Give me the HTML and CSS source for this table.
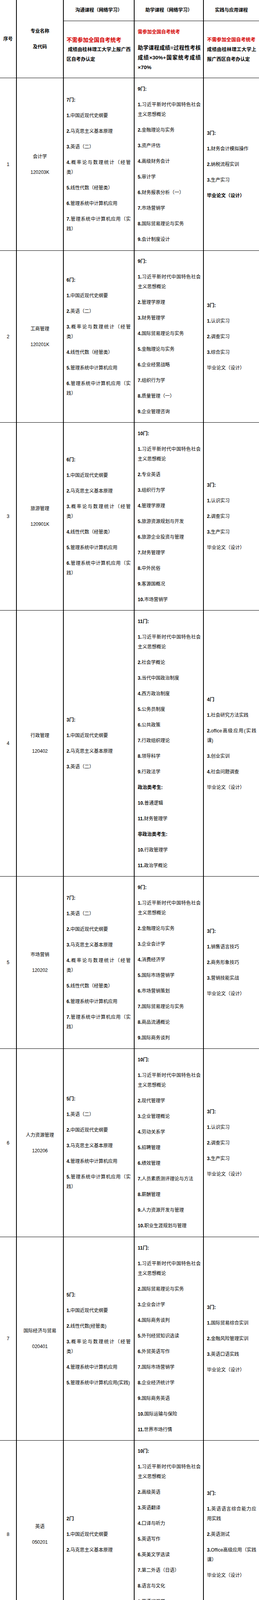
FILE: index.html
```html
<!DOCTYPE html>
<html lang="zh-CN">
<head>
<meta charset="utf-8">
<meta name="viewport" content="width=662, initial-scale=1">
<title>专业课程设置</title>
<link rel="stylesheet" href="styles.css">
</head>
<body>
<div class="plan">
<div class="head">
<div class="cell no hspan"><p>序号</p></div>
<div class="cell major hspan"><p>专业名称</p><p>及代码</p></div>
<div class="cell title">沟通课程（网络学习）</div>
<div class="cell title">助学课程（网络学习）</div>
<div class="cell title last">实践与应用课程</div>
<div class="cell comm"><div class="red lg">不需参加全国自考统考</div><div class="note indent">成绩由桂林理工大学上报广西区自考办认定</div></div>
<div class="cell aid"><p class="red">需参加全国自考统考</p><p class="formula">助学课程成绩=过程性考核成绩×30%+国家统考成绩<span class="nw">×70%</span></p></div>
<div class="cell prac last"><div class="red md">不需参加全国自考统考</div><div class="note">成绩由桂林理工大学上报广西区自考办认定</div></div>
</div>

<div class="row h442">
<div class="cell no">1</div>
<div class="cell major"><p>会计学</p><p>120203K</p></div>
<div class="cell comm">
<p class="h">7门:</p>
<p><b>1.</b>中国近现代史纲要</p>
<p><b>2.</b>马克思主义基本原理</p>
<p><b>3.</b>英语（二）</p>
<p><span class="l1"><b>4.</b>概率论与数理统计（经管</span>类）</p>
<p><b>5.</b>线性代数（经管类）</p>
<p><b>6.</b>管理系统中计算机应用</p>
<p><span class="l1"><b>7.</b>管理系统中计算机应用（实</span>践）</p>
</div>
<div class="cell aid">
<p class="h">9门:</p>
<p><span class="l1"><b>1.</b>习近平新时代中国特色社会</span>主义思想概论</p>
<p><b>2.</b>金融理论与实务</p>
<p><b>3.</b>资产评估</p>
<p><b>4.</b>高级财务会计</p>
<p><b>5.</b>审计学</p>
<p><b>6.</b>财务报表分析（一）</p>
<p><b>7.</b>市场营销学</p>
<p><b>8.</b>国际贸易理论与实务</p>
<p><b>9.</b>会计制度设计</p>
</div>
<div class="cell prac last">
<p class="h">3门:</p>
<p><b>1.</b>财务会计模拟操作</p>
<p><b>2.</b>纳税流程实训</p>
<p><b>3.</b>生产实习</p>
<p class="h">毕业论文（设计）</p>
</div>
</div>

<div class="row h440">
<div class="cell no">2</div>
<div class="cell major"><p>工商管理</p><p>120201K</p></div>
<div class="cell comm">
<p class="h">6门:</p>
<p><b>1.</b>中国近现代史纲要</p>
<p><b>2.</b>英语（二）</p>
<p><span class="l1"><b>3.</b>概率论与数理统计（经管</span>类）</p>
<p><b>4.</b>线性代数（经管类）</p>
<p><b>5.</b>管理系统中计算机应用</p>
<p><span class="l1"><b>6.</b>管理系统中计算机应用（实</span>践）</p>
</div>
<div class="cell aid">
<p class="h">9门:</p>
<p><span class="l1"><b>1.</b>习近平新时代中国特色社会</span>主义思想概论</p>
<p><b>2.</b>管理学原理</p>
<p><b>3.</b>财务管理学</p>
<p><b>4.</b>国际贸易理论与实务</p>
<p><b>5.</b>金融理论与实务</p>
<p><b>6.</b>企业经营战略</p>
<p><b>7.</b>组织行为学</p>
<p><b>8.</b>质量管理（一）</p>
<p><b>9.</b>企业管理咨询</p>
</div>
<div class="cell prac last">
<p class="h">3门:</p>
<p><b>1.</b>认识实习</p>
<p><b>2.</b>调查实习</p>
<p><b>3.</b>综合实习</p>
<p>毕业论文（设计）</p>
</div>
</div>

<div class="row h481">
<div class="cell no">3</div>
<div class="cell major"><p>旅游管理</p><p>120901K</p></div>
<div class="cell comm">
<p class="h">6门:</p>
<p><b>1.</b>中国近现代史纲要</p>
<p><b>2.</b>马克思主义基本原理</p>
<p><span class="l1"><b>3.</b>概率论与数理统计（经管</span>类）</p>
<p><b>4.</b>线性代数（经管类）</p>
<p><b>5.</b>管理系统中计算机应用</p>
<p><span class="l1"><b>6.</b>管理系统中计算机应用（实</span>践）</p>
</div>
<div class="cell aid">
<p class="h">10门:</p>
<p><span class="l1"><b>1.</b>习近平新时代中国特色社会</span>主义思想概论</p>
<p><b>2.</b>专业英语</p>
<p><b>3.</b>组织行为学</p>
<p><b>4.</b>管理学原理</p>
<p><b>5.</b>旅游资源规划与开发</p>
<p><b>6.</b>旅游企业投资与管理</p>
<p><b>7.</b>财务管理学</p>
<p><b>8.</b>中外民俗</p>
<p><b>9.</b>客源国概况</p>
<p><b>10.</b>市场营销学</p>
</div>
<div class="cell prac last">
<p class="h">3门:</p>
<p><b>1.</b>认识实习</p>
<p><b>2.</b>调查实习</p>
<p><b>3.</b>生产实习</p>
<p>毕业论文（设计）</p>
</div>
</div>

<div class="row h681">
<div class="cell no">4</div>
<div class="cell major"><p>行政管理</p><p>120402</p></div>
<div class="cell comm">
<p class="h">3门:</p>
<p><b>1.</b>中国近现代史纲要</p>
<p><b>2.</b>马克思主义基本原理</p>
<p><b>3.</b>英语（二）</p>
</div>
<div class="cell aid">
<p class="h">11门:</p>
<p><span class="l1"><b>1.</b>习近平新时代中国特色社会</span>主义思想概论</p>
<p><b>2.</b>社会学概论</p>
<p><b>3.</b>当代中国政治制度</p>
<p><b>4.</b>西方政治制度</p>
<p><b>5.</b>公务员制度</p>
<p><b>6.</b>公共政策</p>
<p><b>7.</b>行政组织理论</p>
<p><b>8.</b>领导科学</p>
<p><b>9.</b>行政法学</p>
<p class="h">政治类考生:</p>
<p><b>10.</b>普通逻辑</p>
<p><b>11.</b>财务管理学</p>
<p class="h">非政治类考生:</p>
<p><b>10.</b>行政管理学</p>
<p><b>11.</b>政治学概论</p>
</div>
<div class="cell prac last">
<p class="h">4门</p>
<p><b>1.</b>社会研究方法实践</p>
<p><span class="l1"><b>2.</b>office高级应用(实践</span>课)</p>
<p><b>3.</b>创业实训</p>
<p><b>4.</b>社会问题调查</p>
<p>毕业论文（设计）</p>
</div>
</div>

<div class="row h441">
<div class="cell no">5</div>
<div class="cell major"><p>市场营销</p><p>120202</p></div>
<div class="cell comm">
<p class="h">7门:</p>
<p><b>1.</b>英语（二）</p>
<p><b>2.</b>中国近现代史纲要</p>
<p><b>3.</b>马克思主义基本原理</p>
<p><span class="l1"><b>4.</b>概率论与数理统计（经管</span>类）</p>
<p><b>5.</b>线性代数（经管类）</p>
<p><b>6.</b>管理系统中计算机应用</p>
<p><span class="l1"><b>7.</b>管理系统中计算机应用（实</span>践）</p>
</div>
<div class="cell aid">
<p class="h">9门:</p>
<p><span class="l1"><b>1.</b>习近平新时代中国特色社会</span>主义思想概论</p>
<p><b>2.</b>金融理论与实务</p>
<p><b>3.</b>企业会计学</p>
<p><b>4.</b>消费经济学</p>
<p><b>5.</b>国际市场营销学</p>
<p><b>6.</b>市场营销策划</p>
<p><b>7.</b>国际贸易理论与实务</p>
<p><b>8.</b>商品流通概论</p>
<p><b>9.</b>国际商务谈判</p>
</div>
<div class="cell prac last">
<p class="h">3门:</p>
<p><b>1.</b>销售语言技巧</p>
<p><b>2.</b>商务形象技巧</p>
<p><b>3.</b>营销技能实战</p>
<p>毕业论文（设计）</p>
</div>
</div>

<div class="row h482">
<div class="cell no">6</div>
<div class="cell major"><p>人力资源管理</p><p>120206</p></div>
<div class="cell comm">
<p class="h">5门:</p>
<p><b>1.</b>英语（二）</p>
<p><b>2.</b>中国近现代史纲要</p>
<p><b>3.</b>马克思主义基本原理</p>
<p><b>4.</b>管理系统中计算机应用</p>
<p><span class="l1"><b>5.</b>管理系统中计算机应用（实</span>践）</p>
</div>
<div class="cell aid">
<p class="h">10门:</p>
<p><span class="l1"><b>1.</b>习近平新时代中国特色社会</span>主义思想概论</p>
<p><b>2.</b>现代管理学</p>
<p><b>3.</b>企业管理概论</p>
<p><b>4.</b>劳动关系学</p>
<p><b>5.</b>招聘管理</p>
<p><b>6.</b>绩效管理</p>
<p><b>7.</b>人员素质测评理论与方法</p>
<p><b>8.</b>薪酬管理</p>
<p><b>9.</b>人力资源开发与管理</p>
<p><b>10.</b>职业生涯规划与管理</p>
</div>
<div class="cell prac last">
<p class="h">3门:</p>
<p><b>1.</b>认识实习</p>
<p><b>2.</b>调查实习</p>
<p><b>3.</b>生产实习</p>
<p>毕业论文（设计）</p>
</div>
</div>

<div class="row h521">
<div class="cell no">7</div>
<div class="cell major"><p>国际经济与贸易</p><p>020401</p></div>
<div class="cell comm">
<p class="h">5门:</p>
<p><b>1.</b>中国近现代史纲要</p>
<p><b>2.</b>线性代数(经管类)</p>
<p><span class="l1"><b>3.</b>概率论与数理统计（经管</span>类）</p>
<p><b>4.</b>管理系统中计算机应用</p>
<p><b>5.</b>管理系统中计算机应用(实践)</p>
</div>
<div class="cell aid">
<p class="h">11门:</p>
<p><span class="l1"><b>1.</b>习近平新时代中国特色社会</span>主义思想概论</p>
<p><b>2.</b>国际贸易理论与实务</p>
<p><b>3.</b>企业会计学</p>
<p><b>4.</b>国际商务谈判</p>
<p><b>5.</b>外刊经贸知识选读</p>
<p><b>6.</b>外贸英语写作</p>
<p><b>7.</b>国际市场营销学</p>
<p><b>8.</b>企业经济统计学</p>
<p><b>9.</b>国际商务英语</p>
<p><b>10.</b>国际运输与保险</p>
<p><b>11.</b>世界市场行情</p>
</div>
<div class="cell prac last">
<p class="h">3门:</p>
<p><b>1.</b>国际贸易综合实训</p>
<p><b>2.</b>金融风险管理实训</p>
<p><b>3.</b>英语口语实践</p>
<p>毕业论文（设计）</p>
</div>
</div>

<div class="row h480">
<div class="cell no">8</div>
<div class="cell major"><p>英语</p><p>050201</p></div>
<div class="cell comm">
<p class="h">2门</p>
<p><b>1.</b>中国近现代史纲要</p>
<p><b>2.</b>马克思主义基本原理</p>
</div>
<div class="cell aid">
<p class="h">10门:</p>
<p><span class="l1"><b>1.</b>习近平新时代中国特色社会</span>主义思想概论</p>
<p><b>2.</b>高级英语</p>
<p><b>3.</b>英语翻译</p>
<p><b>4.</b>口译与听力</p>
<p><b>5.</b>英语写作</p>
<p><b>6.</b>英美文学选读</p>
<p><b>7.</b>第二外语（日语）</p>
<p><b>8.</b>语言与文化</p>
<p><b>9.</b>英语词汇学</p>
<p><b>10.</b>英语经贸知识</p>
</div>
<div class="cell prac last">
<p class="h">3门:</p>
<p><span class="l1"><b>1.</b>英语语言综合能力应</span>用实践</p>
<p><b>2.</b>英语测试</p>
<p><span class="l1"><b>3.</b>Office高级应用（实践</span>课）</p>
<p>毕业论文（设计）</p>
</div>
</div>

<div class="row h386">
<div class="cell no">9</div>
<div class="cell major"><p>工程造价</p><p>120105</p></div>
<div class="cell comm">
<p class="h">6门:</p>
<p><b>1.</b>英语（二）</p>
<p><b>2.</b>建筑工程制图</p>
<p><b>3.</b>中国近现代史纲要</p>
<p><b>4.</b>马克思主义基本原理</p>
<p><span class="l1"><b>5.</b>概率论与数理统计（经管</span>类）</p>
<p><b>6.</b>线性代数（经管类）</p>
</div>
<div class="cell aid">
<p class="h">7门:</p>
<p><span class="l1"><b>1.</b>习近平新时代中国特色社会</span>主义思想概论</p>
<p><span class="l1"><b>2.</b>建设工程工程量清单计价实</span>务</p>
<p><b>3.</b>建设监理导论</p>
<p><b>4.</b>建设工程合同(含FIDIC)条款</p>
<p><b>5.</b>工程项目管理</p>
<p><b>6.</b>工程造价确定与控制</p>
<p><b>7.</b>房屋建筑工程概论</p>
</div>
<div class="cell prac last">
<p class="h">4门:</p>
<p><b>1.</b>综合课程设计</p>
<p><b>2.</b>认识实习</p>
<p><b>3.</b>调查实习</p>
<p><b>4.</b>综合实习</p>
<p>毕业论文（设计）</p>
</div>
</div>

<div class="row h482">
<div class="cell no">10</div>
<div class="cell major"><p>计算机科学与技术</p><p>080901</p></div>
<div class="cell comm">
<p class="h">5门:</p>
<p><b>1.</b>英语（二）</p>
<p><b>2.</b>中国近现代史纲要</p>
<p><b>3.</b>马克思主义基本原理</p>
<p><b>4.</b>高等数学（工本）</p>
<p><b>5.</b>概率论与数理统计（二）</p>
</div>
<div class="cell aid">
<p class="h">10门:</p>
<p><span class="l1"><b>1.</b>习近平新时代中国特色社会</span>主义思想概论</p>
<p><b>2.</b>离散数学</p>
<p><b>3.</b>计算机系统结构</p>
<p><b>4.</b>操作系统</p>
<p><b>5.</b>数据结构</p>
<p><b>6.</b>软件工程</p>
<p><b>7.</b>数据库系统原理</p>
<p><b>8.</b>C++程序设计</p>
<p><b>9.</b>Java 语言程序设计（一）</p>
<p><b>10.</b>计算机网络原理</p>
</div>
<div class="cell prac last">
<p class="h">3门:</p>
<p><span class="l1"><b>1.</b>JAVA开发实训（实践</span>课）</p>
<p><b>2.</b>数据结构（实践课）</p>
<p><span class="l1"><b>3.</b>软件项目综合开发</span>（实践课）</p>
<p>毕业论文（设计）</p>
</div>
</div>

<div class="row h416">
<div class="cell no">11</div>
<div class="cell major"><p>土木工程</p><p>081001</p></div>
<div class="cell comm">
<p class="h">8门:</p>
<p><b class="gap">1.</b>英语（二）</p>
<p><b class="gap">2.</b>物理（工）</p>
<p><b class="gap">3.</b>概率论与数理统计（二）</p>
<p><b class="gap">4.</b>线性代数</p>
<p><span class="l1"><b class="gap">5.</b>习近平新时代中国特色社会</span>主义思想概论</p>
<p><b class="gap">6.</b>中国近现代史纲要</p>
<p><b class="gap">7.</b>马克思主义基本原理</p>
<p><b class="gap">8.</b>流体力学（实践）</p>
</div>
<div class="cell aid">
<p class="h">9门:</p>
<p><b class="gap">1.</b>计算机基础与程序设计</p>
<p><b class="gap">2.</b>工程地质及土力学</p>
<p><b class="gap">3.</b>结构力学（二）</p>
<p><b class="gap">4.</b>混凝土结构设计</p>
<p><b class="gap">5.</b>钢结构</p>
<p><b class="gap">6.</b>建筑设备</p>
<p><b class="gap">7.</b>建筑经济与企业管理</p>
<p><b class="gap">8.</b>建筑结构试验</p>
<p><b class="gap">9.</b>流体力学</p>
</div>
<div class="cell prac last">
<p class="h">3门:</p>
<p><b>1.</b>认识实习</p>
<p><b>2.</b>调查实习</p>
<p><b>3.</b>生产实习</p>
<p>毕业论文（设计）</p>
</div>
</div>

<div class="row h480">
<div class="cell no">12</div>
<div class="cell major"><p>环境设计</p><p>130503</p></div>
<div class="cell comm">
<p class="h">4门:</p>
<p><b>1.</b>英语（二）</p>
<p><b>2.</b>中国近现代史纲要</p>
<p><b>3.</b>马克思主义基本原理</p>
<p class="alert"><span class="l1"><b>4.</b>计算机室内设计绘图</span>（CAD）（实践）</p>
</div>
<div class="cell aid">
<p class="h">10门:</p>
<p><span class="l1"><b>1.</b>习近平新时代中国特色社会</span>主义思想概论</p>
<p><b>2.</b>设计素描</p>
<p><b>3.</b>设计色彩</p>
<p><b>4.</b>景观设计</p>
<p><b>5.</b>中外建筑史</p>
<p><b>6.</b>市场营销学</p>
<p><b>7.</b>建筑与室内制图</p>
<p><b>8.</b>文化、住宅空间室内设计</p>
<p><b>9.</b>商业建筑室内设计</p>
<p><b>10.</b>餐饮建筑室内设计</p>
</div>
<div class="cell prac last">
<p class="h">3门:</p>
<p><b>1.</b>认识实习</p>
<p><b>2.</b>调查实习</p>
<p><b>3.</b>生产实习</p>
<p>毕业论文（设计）</p>
</div>
</div>

<div class="row h482">
<div class="cell no off">13</div>
<div class="cell major"><p>视觉传达设计<br>130502</p></div>
<div class="cell comm">
<p class="h">5门:</p>
<p><b class="gap">1.</b>英语（二）</p>
<p><span class="l1"><b class="gap">2.</b>习近平新时代中国特色社会</span>主义思想概论</p>
<p><b class="gap">3.</b>中国近现代史纲要</p>
<p><b class="gap">4.</b>马克思主义基本原理</p>
<p class="alert"><b class="gap">5.</b>网页设计(实践)</p>
</div>
<div class="cell aid">
<p class="h">10门:</p>
<p><b class="gap">1.</b>展示设计</p>
<p><b class="gap">2.</b>字体设计</p>
<p><b class="gap">3.</b>CI设计</p>
<p><b class="gap">4.</b>计算机辅助设计基础</p>
<p><b class="gap">5.</b>产品包装设计(实践)</p>
<p><b class="gap">6.</b>装饰色彩(实践)</p>
<p><b class="gap">7.</b>现代设计史</p>
<p><b class="gap">8.</b>系列书籍装帧设计</p>
<p><b class="gap">9.</b>广告设计</p>
<p><span class="l1"><b class="gap">10.</b>计算机辅助设计基础(实</span>践)</p>
</div>
<div class="cell prac last">
<p class="h">3门:</p>
<p><b class="gap">1.</b>认识实习</p>
<p><b class="gap">2.</b>调查实习</p>
<p><b class="gap">3.</b>生产实习</p>
<p>毕业论文（设计）</p>
</div>
</div>
</div>
</body>
</html>
```

FILE: styles.css
```css
html, body {
  margin: 0;
  padding: 0;
  background: #fff;
}

body {
  width: 662px;
  font-family: "Liberation Sans", "Noto Sans CJK SC", sans-serif;
  font-size: 12px;
  line-height: 25px;
  color: #000;
}

.plan {
  width: 662px;
}

.head,
.row {
  display: grid;
  grid-template-columns: 43px 120px 181px 177px 141px;
}

.head {
  grid-template-rows: 54px 146px;
}

.head .hspan {
  grid-row: span 2;
}

.h442 { height: 442px; }
.h440 { height: 440px; }
.h481 { height: 481px; }
.h681 { height: 681px; }
.h441 { height: 441px; }
.h482 { height: 482px; }
.h521 { height: 521px; }
.h480 { height: 480px; }
.h386 { height: 386px; }
.h416 { height: 416px; }

.cell {
  box-sizing: border-box;
  display: flex;
  flex-direction: column;
  justify-content: center;
  overflow: hidden;
  min-width: 0;
  min-height: 0;
  border-right: 2px solid #000;
  border-bottom: 1px solid #000;
  padding: 8px 0 7px;
  text-align: justify;
}

.cell.last {
  border-right: none;
}

.cell p {
  margin: 0;
  padding: 7.5px 0;
}

.cell b {
  font-weight: bold;
}

.cell b.gap {
  margin-right: 7.5px;
}

.l1 {
  display: block;
  white-space: nowrap;
  text-align: justify;
  text-align-last: justify;
}

.no {
  text-align: center;
}

.no.off {
  text-align: left;
  padding-left: 8px;
}

.major {
  text-align: center;
}

.comm {
  padding-left: 7px;
  padding-right: 8px;
}

.aid {
  padding-left: 8px;
  padding-right: 6px;
}

.prac {
  padding-left: 8px;
  padding-right: 7px;
}

.head .cell {
  font-weight: bold;
}

.head .title {
  text-align: center;
  padding: 0;
}

.red {
  color: #d40000;
  font-weight: bold;
}

.red.lg {
  font-size: 14px;
}

.red.md {
  font-size: 12.4px;
}

.note {
  font-size: 12.2px;
  font-weight: bold;
}

.note.indent {
  text-indent: 3.5px;
}

.formula {
  font-size: 13.5px;
  font-weight: bold;
}

.nw {
  white-space: nowrap;
}

.h {
  font-weight: bold;
}

.alert {
  color: #ff0000;
}
```
